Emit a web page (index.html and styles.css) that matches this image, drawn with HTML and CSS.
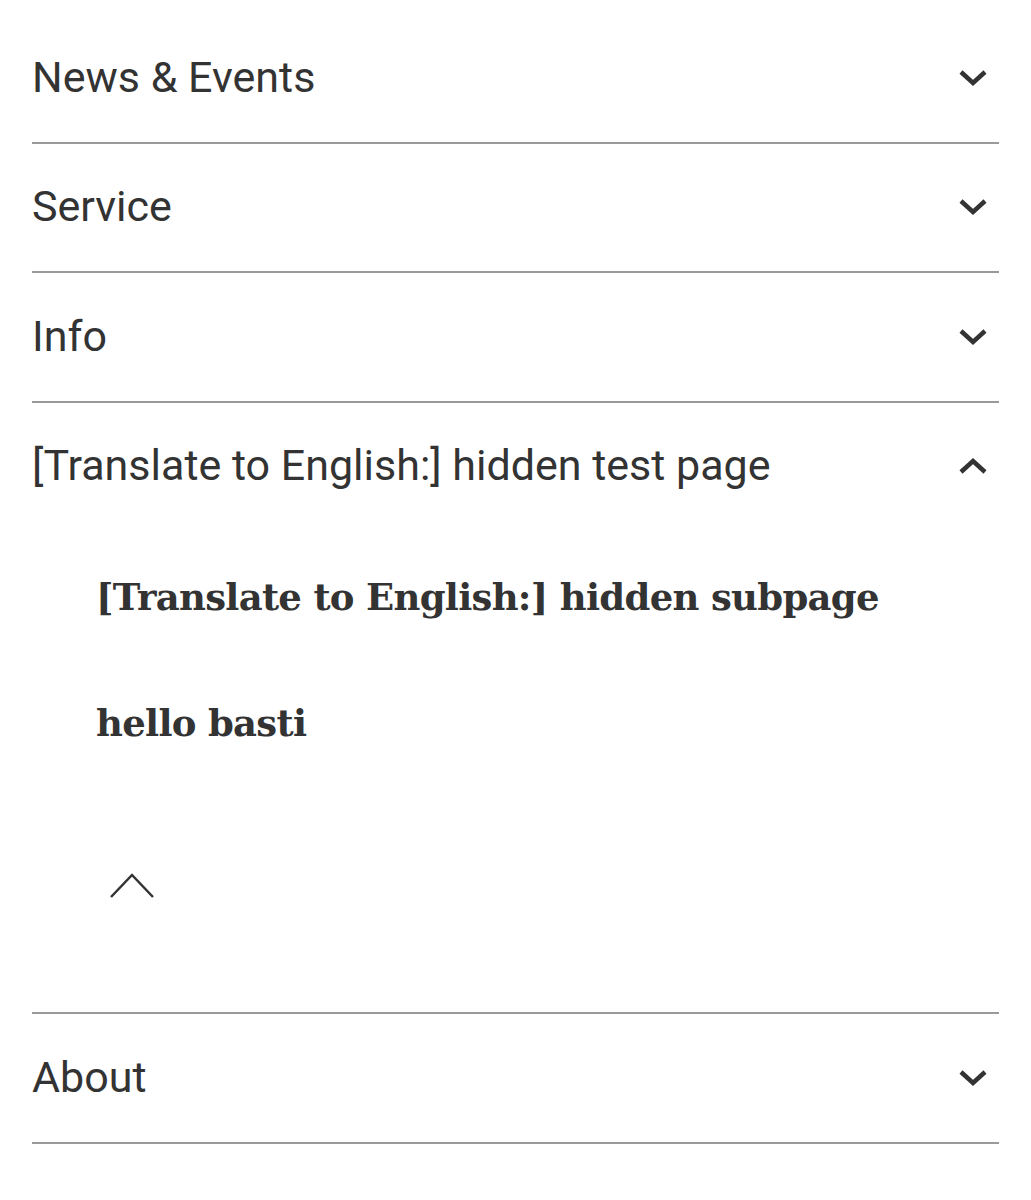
FILE: index.html
```html
<!DOCTYPE html>
<html>
<head>
<meta charset="utf-8">
<link rel="stylesheet" href="styles.css">
</head>
<body>
<nav class="menu">
  <div class="item">
    <div class="head"><span class="label">News &amp; Events</span>
      <svg class="chev" viewBox="0 0 30 18"><path d="M3 3 L15 14 L27 3"/></svg></div>
  </div>
  <div class="item">
    <div class="head"><span class="label">Service</span>
      <svg class="chev" viewBox="0 0 30 18"><path d="M3 3 L15 14 L27 3"/></svg></div>
  </div>
  <div class="item">
    <div class="head"><span class="label">Info</span>
      <svg class="chev" viewBox="0 0 30 18"><path d="M3 3 L15 14 L27 3"/></svg></div>
  </div>
  <div class="item open">
    <div class="head"><span class="label">[Translate to English:] hidden test page</span>
      <svg class="chev" viewBox="0 0 30 18"><path d="M3 15 L15 4 L27 15"/></svg></div>
    <ul class="sub">
      <li>[Translate to English:] hidden subpage</li>
      <li>hello basti</li>
    </ul>
    <div class="close">
      <svg class="thin" viewBox="0 0 46 28"><path d="M2 26 L23 4 L44 26"/></svg>
    </div>
  </div>
  <div class="item">
    <div class="head"><span class="label">About</span>
      <svg class="chev" viewBox="0 0 30 18"><path d="M3 3 L15 14 L27 3"/></svg></div>
  </div>
</nav>
</body>
</html>
```
FILE: styles.css
```css
html, body {
  margin: 0;
  padding: 0;
  background: #fff;
}
.menu {
  padding: 14px 32px 0 32px;
  width: 967px;
  font-family: Roboto, "Noto Sans", sans-serif;
  color: #333;
}
.item {
  border-bottom: 2px solid #999;
}
.head {
  height: 127.5px;
  display: flex;
  align-items: center;
  justify-content: space-between;
}
.label {
  font-size: 43px;
  padding-bottom: 2px;
}
.chev {
  width: 30px;
  height: 18px;
  margin-right: 11px;
}
.chev path {
  fill: none;
  stroke: #333;
  stroke-width: 4.5;
}
.sub {
  list-style: none;
  margin: 4px 0 0 0;
  padding: 0 0 0 64px;
}
.sub li {
  height: 126px;
  display: flex;
  align-items: center;
  font-family: "DejaVu Serif", serif;
  font-weight: bold;
  font-size: 37px;
  letter-spacing: -0.7px;
}
.close {
  height: 226px;
  padding-left: 77px;
  padding-top: 85px;
  box-sizing: border-box;
}
.thin {
  width: 46px;
  height: 28px;
  display: block;
}
.thin path {
  fill: none;
  stroke: #333;
  stroke-width: 2.5;
}
```
